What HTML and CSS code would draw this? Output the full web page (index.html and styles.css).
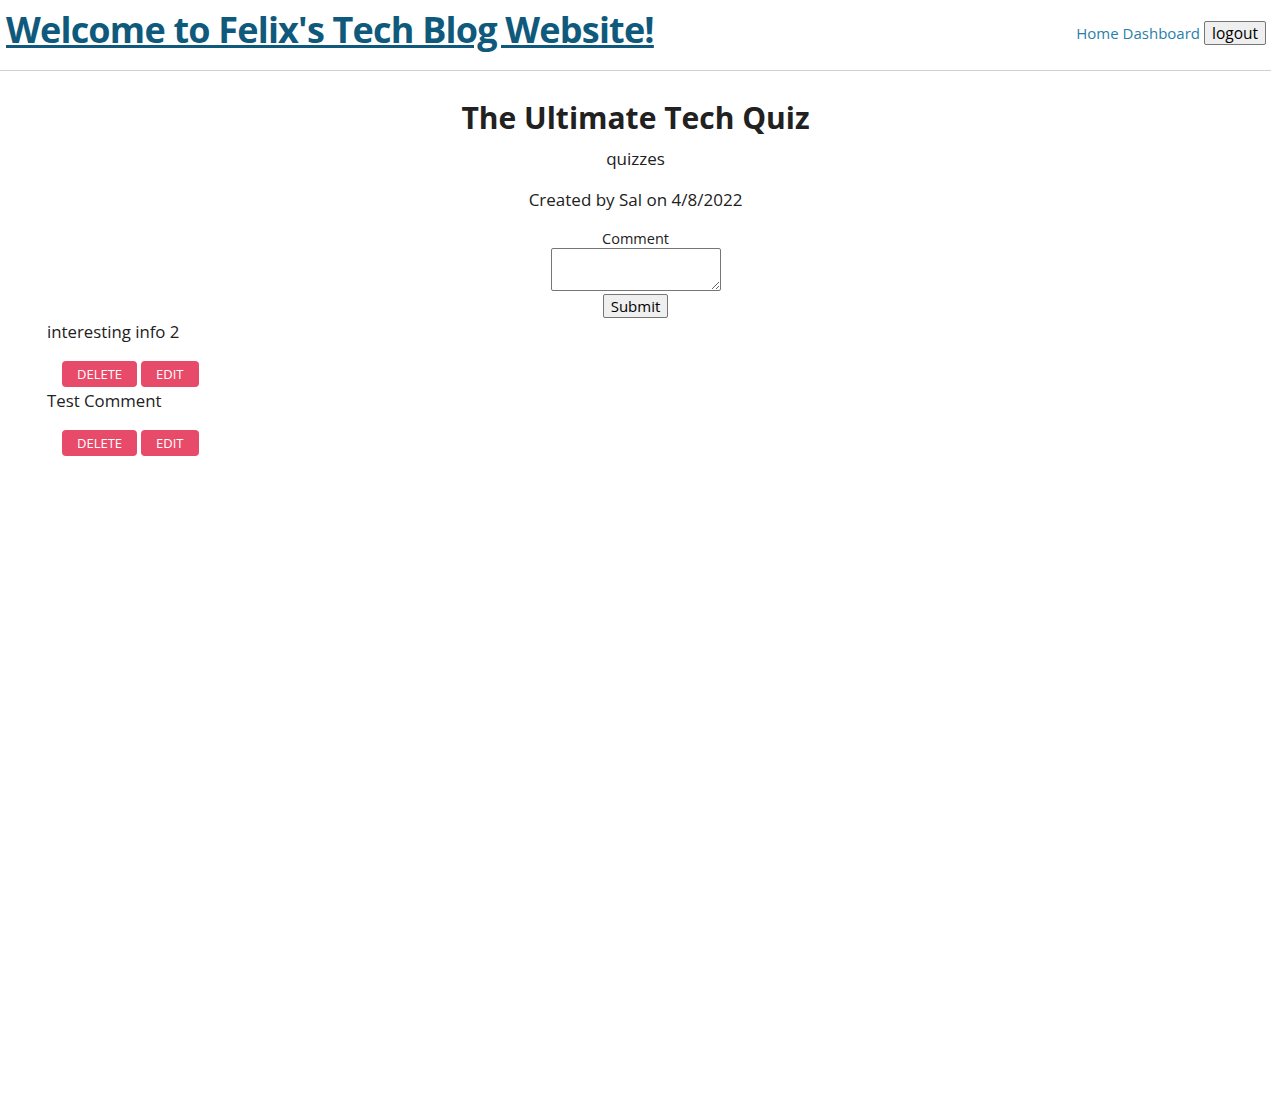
FILE: index.html
```html
<!DOCTYPE html>
<html>
<head>
<meta charset="utf-8">
<title>Felix's Tech Blog</title>
<link rel="stylesheet" href="styles.css">
</head>
<body>
<header class="site-header">
  <h1 class="site-title"><a href="#">Welcome to Felix's Tech Blog Website!</a></h1>
  <nav class="site-nav">
    <a href="#">Home</a>
    <a href="#">Dashboard</a>
    <button class="logout">logout</button>
  </nav>
</header>
<main class="post">
  <h2 class="post-title">The Ultimate Tech Quiz</h2>
  <p class="post-body">quizzes</p>
  <p class="post-meta">Created by Sal on 4/8/2022</p>
  <form class="comment-form">
    <label class="comment-label" for="c">Comment</label>
    <textarea id="c" class="comment-input"></textarea>
    <button type="button" class="submit">Submit</button>
  </form>
  <section class="comments">
    <div class="comment">
      <p class="comment-text">interesting info 2</p>
      <div class="actions">
        <button class="btn">DELETE</button>
        <button class="btn">EDIT</button>
      </div>
    </div>
    <div class="comment">
      <p class="comment-text">Test Comment</p>
      <div class="actions">
        <button class="btn">DELETE</button>
        <button class="btn">EDIT</button>
      </div>
    </div>
  </section>
</main>
</body>
</html>
```

FILE: styles.css
```css
body {
  margin: 0;
  font-family: "Open Sans", "Noto Sans", sans-serif;
  color: #212121;
  background: #fff;
}
.site-header {
  display: flex;
  justify-content: space-between;
  align-items: center;
  box-sizing: border-box;
  height: 71px;
  border-bottom: 1px solid #d0d0d0;
  padding: 0 5px 10px 6px;
}
.site-title {
  margin: 0;
  font-size: 36px;
  line-height: 44px;
  font-weight: 700;
  letter-spacing: -0.8px;
}
.site-title a {
  color: #0f5a7c;
}
.site-nav {
  display: flex;
  align-items: center;
  gap: 4px;
  font-size: 15px;
  margin-top: 6px;
}
.site-nav a {
  color: #2a7fa8;
  text-decoration: none;
}
.logout {
  font-family: inherit;
  font-size: 15.5px;
  padding: 0 7px;
  height: 24px;
  border: 1px solid #767676;
  border-radius: 2px;
  background: #efefef;
  color: #000;
}
.post {
  text-align: center;
}
.post-title {
  margin: 27px 0 0;
  font-size: 30px;
  line-height: 40px;
  font-weight: 700;
}
.post-body, .post-meta {
  font-size: 17px;
  line-height: 24px;
  margin: 9px 0 0;
}
.post-meta { margin-top: 17px; }
.comment-form {
  display: flex;
  flex-direction: column;
  align-items: center;
  margin-top: 18px;
}
.comment-label { font-size: 14.5px; line-height: 18px; }
.comment-input {
  box-sizing: border-box;
  width: 170px;
  height: 43px;
  border: 1px solid #767676;
  border-radius: 2px;
  margin: 0;
}
.submit {
  font-family: inherit;
  font-size: 15px;
  height: 24px;
  padding: 0 7px;
  margin-top: 3px;
  border: 1px solid #767676;
  border-radius: 2px;
  background: #efefef;
  color: #000;
}
.comments {
  text-align: left;
  padding-left: 47px;
}
.comment-text {
  font-size: 16.8px;
  line-height: 24px;
  margin: 2px 0 0;
}
.actions {
  display: flex;
  gap: 4px;
  margin: 17px 0 0 15px;
}
.btn {
  font-family: inherit;
  font-size: 13px;
  color: #fff;
  background: #e84a6a;
  border: none;
  border-radius: 4px;
  height: 26px;
  padding: 0 15px;
}
```
